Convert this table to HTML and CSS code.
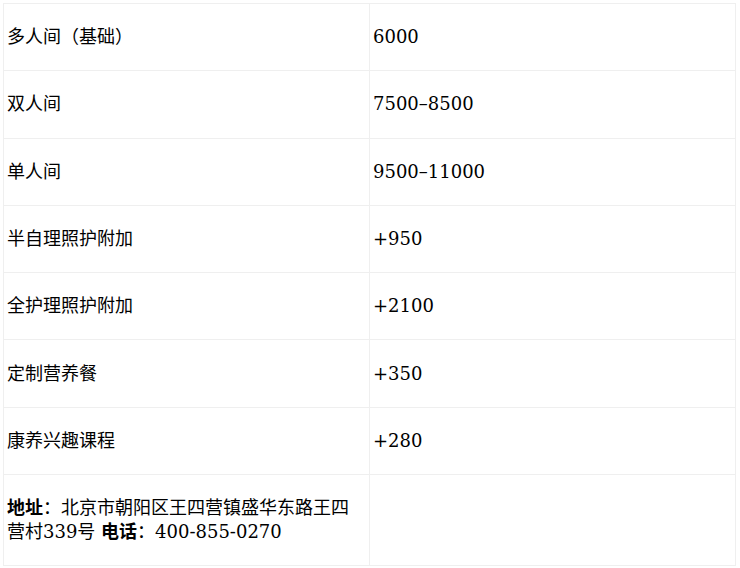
FILE: index.html
```html
<!DOCTYPE html>
<html lang="zh">
<head>
<meta charset="utf-8">
<link rel="stylesheet" href="styles.css">
</head>
<body>
<div class="page">
<table class="price-table">
<tbody>
<tr><td>多人间（基础）</td><td>6000</td></tr>
<tr><td>双人间</td><td>7500–8500</td></tr>
<tr><td>单人间</td><td>9500–11000</td></tr>
<tr><td>半自理照护附加</td><td>+950</td></tr>
<tr><td>全护理照护附加</td><td>+2100</td></tr>
<tr><td>定制营养餐</td><td>+350</td></tr>
<tr><td>康养兴趣课程</td><td>+280</td></tr>
<tr><td><strong>地址</strong>：北京市朝阳区王四营镇盛华东路王四营村339号 <strong>电话</strong>：400-855-0270</td><td></td></tr>
</tbody>
</table>
</div>
</body>
</html>
```
FILE: styles.css
```css
html, body {
  margin: 0;
  padding: 0;
  background: #fff;
}
.page {
  padding: 3px;
}
.price-table {
  width: 733px;
  table-layout: fixed;
  border-collapse: collapse;
  font-family: "DejaVu Serif", "Noto Sans CJK SC", serif;
  font-size: 18px;
  color: #000;
}
.price-table td {
  border: 1px solid #efefef;
  padding: 21.15px 3px;
  vertical-align: middle;
  text-align: left;
  line-height: 24px;
}
.price-table strong {
  font-weight: bold;
}
```
